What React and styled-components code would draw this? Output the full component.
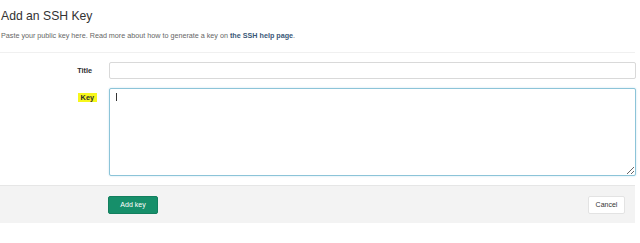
import React from "react";
import styled, { createGlobalStyle } from "styled-components";

const Global = createGlobalStyle`
  html, body { margin: 0; padding: 0; background: #fff; }
  body { font-family: "Liberation Sans", Arial, sans-serif; color: #2e2e2e; }
  * { box-sizing: border-box; }
`;

const Page = styled.div`
  width: 635px;
  padding-top: 8px;
`;

const Heading = styled.h3`
  margin: 0;
  padding-left: 1px;
  font-size: 12.2px;
  font-weight: 400;
  line-height: 17px;
  color: #333;
`;

const Lead = styled.p`
  margin: 6px 0 0;
  padding-left: 1px;
  font-size: 7.2px;
  line-height: 10px;
  color: #666;
  padding-bottom: 11px;
  border-bottom: 1px solid #f0f0f0;
`;

const HelpLink = styled.a`
  color: #3a5878;
  font-weight: 700;
  text-decoration: none;
`;

const Form = styled.form`
  display: flex;
  flex-direction: column;
  gap: 9px;
  padding-top: 9px;
`;

const Row = styled.div`
  display: grid;
  grid-template-columns: 109px 1fr;
  align-items: start;
`;

const Label = styled.label`
  justify-self: end;
  margin-right: ${(p) => p.$mr}px;
  margin-top: ${(p) => p.$mt}px;
  font-size: 7.3px;
  font-weight: 700;
  line-height: 9px;
  color: #2e2e2e;
  background: ${(p) => (p.$highlight ? "#f7f71c" : "transparent")};
  padding: ${(p) => (p.$highlight ? "0 3px" : "0")};
`;

const TextInput = styled.input`
  width: 527px;
  height: 17px;
  border: 1px solid #d9d9d9;
  border-radius: 2px;
  background: #fff;
  padding: 0 6px;
  font: inherit;
  outline: none;
`;

const TextArea = styled.textarea`
  display: block;
  width: 527px;
  height: 88px;
  border: 1px solid #8cc4d8;
  border-radius: 2px;
  box-shadow: 0 0 2px rgba(120, 190, 220, 0.45);
  background: #fff;
  padding: 4px 6px;
  font-family: "Liberation Sans", Arial, sans-serif;
  font-size: 7px;
  outline: none;
  resize: vertical;
`;

const Caret = styled.span`
  position: absolute;
  left: 7px;
  top: 5px;
  width: 1px;
  height: 8px;
  background: #333;
`;

const AreaWrap = styled.div`
  position: relative;
  width: 527px;
`;

const Footer = styled.div`
  margin-top: 9px;
  height: 38px;
  background: #f3f3f3;
  border-top: 1px solid #e6e6e6;
  display: flex;
  align-items: center;
  justify-content: space-between;
  padding: 0 10px 0 108px;
`;

const Button = styled.button`
  height: 18px;
  width: ${(p) => p.$w}px;
  border-radius: 2px;
  font-family: "Liberation Sans", Arial, sans-serif;
  font-size: 7px;
  padding: 0;
  cursor: pointer;
  background: ${(p) => (p.$primary ? "#168f6a" : "#fff")};
  color: ${(p) => (p.$primary ? "#fff" : "#333")};
  border: 1px solid ${(p) => (p.$primary ? "#137f5e" : "#e3e3e3")};
`;

export default function App() {
  return (
    <>
      <Global />
      <Page>
        <Heading>Add an SSH Key</Heading>
        <Lead>
          Paste your public key here. Read more about how to generate a key on{" "}
          <HelpLink href="#">the SSH help page</HelpLink>.
        </Lead>
        <Form onSubmit={(e) => e.preventDefault()}>
          <Row>
            <Label $mr={17} $mt={4}>Title</Label>
            <TextInput type="text" />
          </Row>
          <Row>
            <Label $mr={12} $mt={5} $highlight>Key</Label>
            <AreaWrap>
              <TextArea />
              <Caret />
            </AreaWrap>
          </Row>
        </Form>
        <Footer>
          <Button $primary $w={50}>Add key</Button>
          <Button $w={37}>Cancel</Button>
        </Footer>
      </Page>
    </>
  );
}
